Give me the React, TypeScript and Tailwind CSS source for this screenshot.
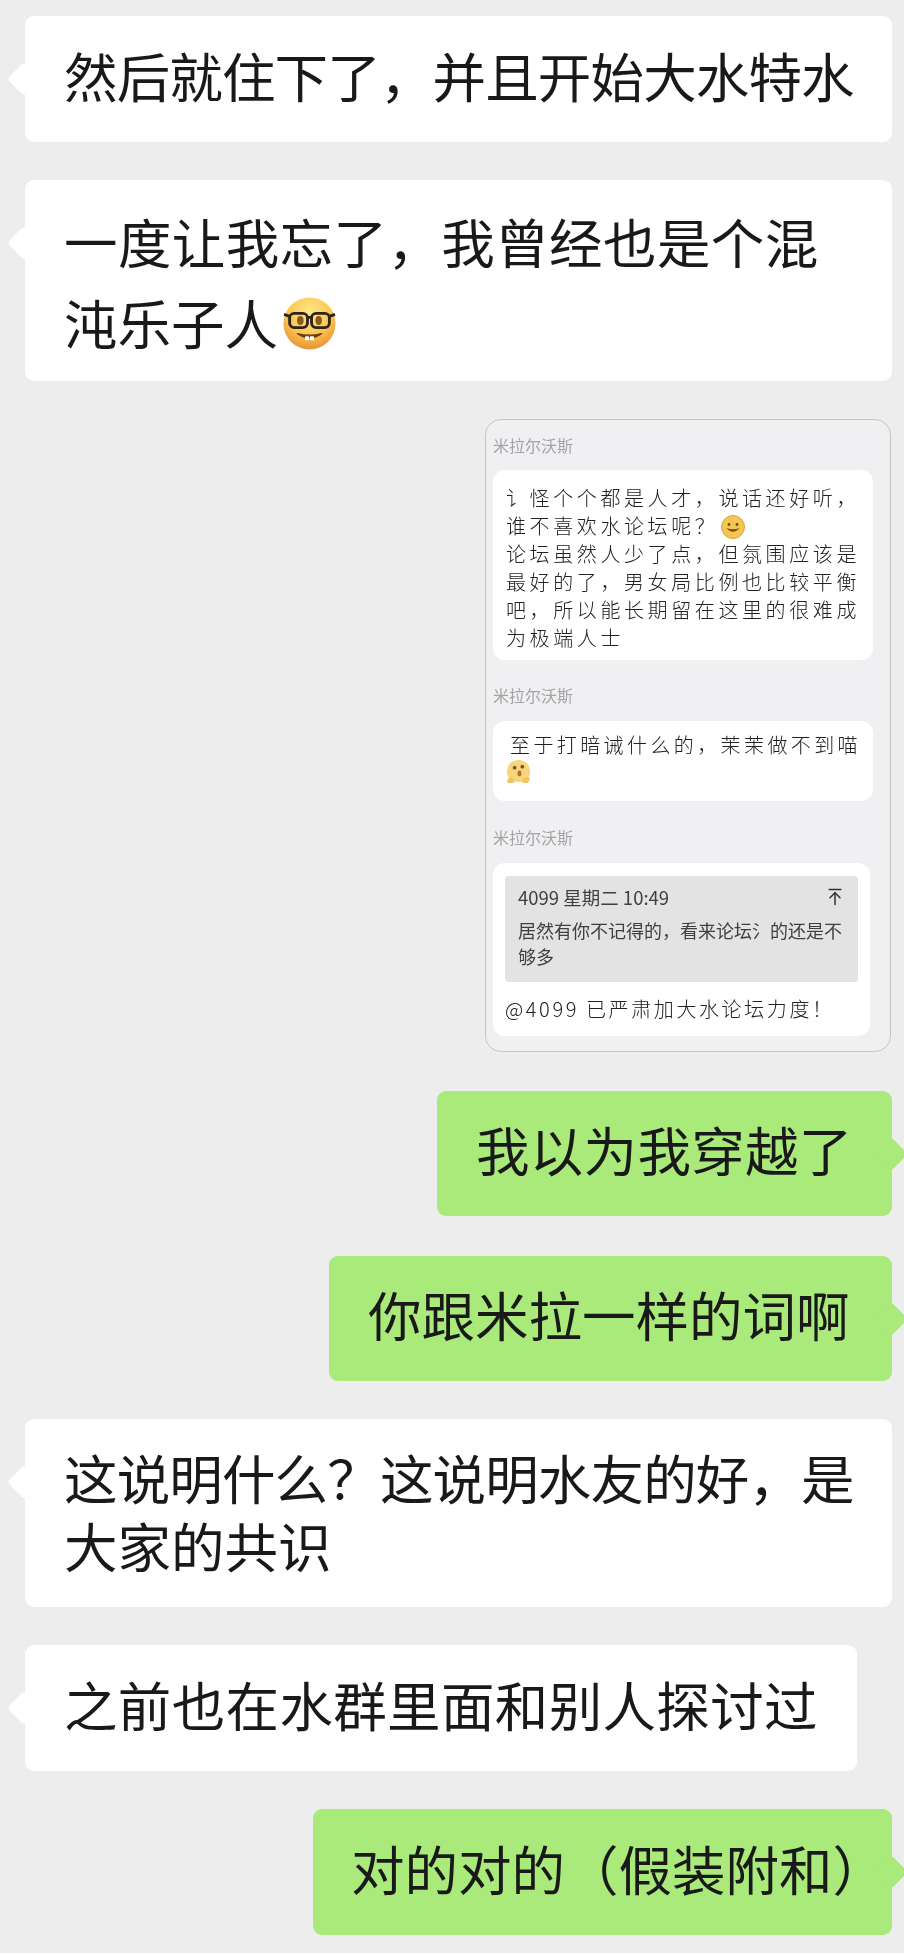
import React from "react";
import { ArrowUpToLine } from "lucide-react";

const cjk = "font-['Noto_Sans_CJK_SC','Noto_Sans',sans-serif]";

const Bubble = ({
  mine,
  className,
  children,
}: {
  mine?: boolean;
  className?: string;
  children: React.ReactNode;
}) => {
  return (
    <div
      className={`relative rounded-[9px] text-[53.5px] leading-[68px] text-[#191919] whitespace-nowrap ${
        mine ? "self-end mr-[12px] bg-[#a9ea7a]" : "ml-[25px] self-start bg-white"
      } ${className ?? ""}`}
    >
      <span
        className={`absolute top-[51px] h-[24px] w-[24px] rotate-45 rounded-[4px] ${
          mine ? "right-[-11px] bg-[#a9ea7a]" : "left-[-13px] bg-white"
        }`}
      />
      <div className="relative">{children}</div>
    </div>
  );
};

const NerdFace = () => (
  <svg viewBox="0 0 52 52" className="ml-[5px] mt-[3px] h-[53px] w-[53px]">
    <defs>
      <radialGradient id="nerdFill" cx="50%" cy="30%" r="70%">
        <stop offset="0%" stopColor="#ffe98c" />
        <stop offset="60%" stopColor="#fbc650" />
        <stop offset="100%" stopColor="#e8923a" />
      </radialGradient>
    </defs>
    <circle cx="26" cy="26" r="25.5" fill="url(#nerdFill)" />
    <ellipse cx="17" cy="23" rx="3.2" ry="4.4" fill="#8a5a1c" />
    <ellipse cx="35" cy="23" rx="3.2" ry="4.4" fill="#8a5a1c" />
    <rect x="6.5" y="16" width="17.5" height="14" rx="4.5" fill="none" stroke="#2f241b" strokeWidth="2.8" />
    <rect x="28" y="16" width="17.5" height="14" rx="4.5" fill="none" stroke="#2f241b" strokeWidth="2.8" />
    <path d="M24 20h4M6.5 19 L1 17M45.5 19 L51 17" stroke="#2f241b" strokeWidth="2.8" fill="none" />
    <path d="M14 36 Q26 44 38 36 Q26 39 14 36Z" fill="#6b3d14" stroke="#6b3d14" strokeWidth="1.2" strokeLinejoin="round" />
    <rect x="21.6" y="38.6" width="4" height="3.8" rx="0.8" fill="#fff" />
    <rect x="26.4" y="38.6" width="4" height="3.8" rx="0.8" fill="#fff" />
  </svg>
);

const SmileFace = () => (
  <svg viewBox="0 0 24 24" className="ml-[3px] inline-block h-[24px] w-[24px] align-[-5px]">
    <circle cx="12" cy="12" r="11.5" fill="#f4c550" stroke="#d9a544" strokeWidth="1" />
    <circle cx="8" cy="9.5" r="1.4" fill="#6b4a1c" />
    <circle cx="16" cy="9.5" r="1.4" fill="#6b4a1c" />
    <path d="M5.5 13 Q12 20.5 18.5 13 Q12 15.5 5.5 13Z" fill="#7a4a1c" />
  </svg>
);

const ShyFace = () => (
  <svg viewBox="0 0 26 26" className="h-[25px] w-[25px]">
    <path d="M13 1C20 1 25 6 25 13C25 20 21 24 13 24C5 24 1 20 1 13C1 6 6 1 13 1Z" fill="#f8d77c" />
    <circle cx="9" cy="9" r="2" fill="#7a5a2c" />
    <circle cx="17" cy="8" r="2" fill="#7a5a2c" />
    <ellipse cx="14" cy="15" rx="2" ry="3" fill="#a8752c" />
    <path d="M1 22 Q5 16 9 21 L8 25 H2Z" fill="#f2c563" />
    <path d="M17 21 Q21 17 25 20 L23 25 H17Z" fill="#f2c563" />
  </svg>
);

const Name = ({ className }: { className?: string }) => (
  <div className={`text-[16px] leading-[20px] text-[#a4a4a6] ${className ?? ""}`}>米拉尔沃斯</div>
);

const QuoteCard = () => {
  return (
    <div className="mr-[13px] w-[406px] self-end rounded-[16px] border border-[#c4c4c6] bg-[#f0f0f2] pb-[15px] pl-[7px] pt-[15px] blur-[0.4px]">
      <Name />
      <div className="mt-[15px] h-[190px] w-[380px] whitespace-nowrap rounded-[12px] bg-white px-[13px] pt-[14px] text-[20px] font-light leading-[28px] tracking-[3.6px] text-[#222]">
        <div>{"讠怪个个都是人才\uFF0C说话还好听\uFF0C"}</div>
        <div>
          {"谁不喜欢水论坛呢\uFF1F"}
          <SmileFace />
        </div>
        <div>{"论坛虽然人少了点\uFF0C但氛围应该是"}</div>
        <div>{"最好的了\uFF0C男女局比例也比较平衡"}</div>
        <div>{"吧\uFF0C所以能长期留在这里的很难成"}</div>
        <div>为极端人士</div>
      </div>
      <Name className="mt-[25px]" />
      <div className="mt-[16px] h-[80px] w-[380px] whitespace-nowrap rounded-[12px] bg-white px-[13px] pt-[10px] text-[20px] font-light leading-[28px] tracking-[3.4px] text-[#222]">
        <div className="pl-[4px]">{"至于打暗诫什么的\uFF0C茉茉做不到喵"}</div>
        <ShyFace />
      </div>
      <Name className="mt-[26px]" />
      <div className="mt-[16px] h-[173px] w-[377px] rounded-[12px] bg-white px-[12px] pt-[13px]">
        <div className="h-[106px] w-[353px] rounded-[4px] bg-[#e3e3e3] px-[13px] pt-[9px] text-[#3f3f3f]">
          <div className="flex items-center justify-between text-[18.5px] leading-[24px]">
            <span>4099 星期二 10:49</span>
            <ArrowUpToLine className="h-[20px] w-[20px] text-[#333]" strokeWidth={1.8} />
          </div>
          <div className="mt-[8px] text-[18px] leading-[26px]">{"居然有你不记得的\uFF0C看来论坛氵的还是不"}</div>
          <div className="text-[18px] leading-[26px]">够多</div>
        </div>
        <div className="mt-[13px] whitespace-nowrap text-[20px] font-light leading-[28px] tracking-[2.6px] text-[#222]">
          {"@4099 已严肃加大水论坛力度\uFF01"}
        </div>
      </div>
    </div>
  );
};

const App = () => {
  return (
    <div className={`flex h-[1953px] w-[904px] flex-col gap-[38px] overflow-hidden bg-[#ededed] pt-[16px] ${cjk}`}>
      <Bubble className="w-[867px] pb-[33px] pl-[39px] pt-[25px] tracking-[-0.85px]">
        {"然后就住下了\uFF0C并且开始大水特水"}
      </Bubble>
      <Bubble className="w-[867px] pb-[24px] pl-[39px] pt-[27px]">
        <div className="tracking-[0.4px]">{"一度让我忘了\uFF0C我曾经也是个混"}</div>
        <div className="mt-[12px] flex h-[70px] items-center">
          沌乐子人
          <NerdFace />
        </div>
      </Bubble>
      <QuoteCard />
      <Bubble mine className="mt-[1px] w-[455px] pb-[33px] pl-[39px] pt-[24px] tracking-[0.3px]">
        我以为我穿越了
      </Bubble>
      <Bubble mine className="mt-[2px] w-[563px] pb-[33px] pl-[39px] pt-[24px]">
        你跟米拉一样的词啊
      </Bubble>
      <Bubble className="w-[867px] pb-[28px] pl-[39px] pt-[24px]">
        <div className="tracking-[-0.85px]">{"这说明什么\uFF1F这说明水友的好\uFF0C是"}</div>
        <div>大家的共识</div>
      </Bubble>
      <Bubble className="w-[832px] pb-[33px] pl-[39px] pt-[25px] tracking-[0.35px]">之前也在水群里面和别人探讨过</Bubble>
      <Bubble mine className="w-[579px] pb-[33px] pl-[38px] pt-[25px]">
        {"对的对的\uFF08假装附和\uFF09"}
      </Bubble>
    </div>
  );
};

export default App;
